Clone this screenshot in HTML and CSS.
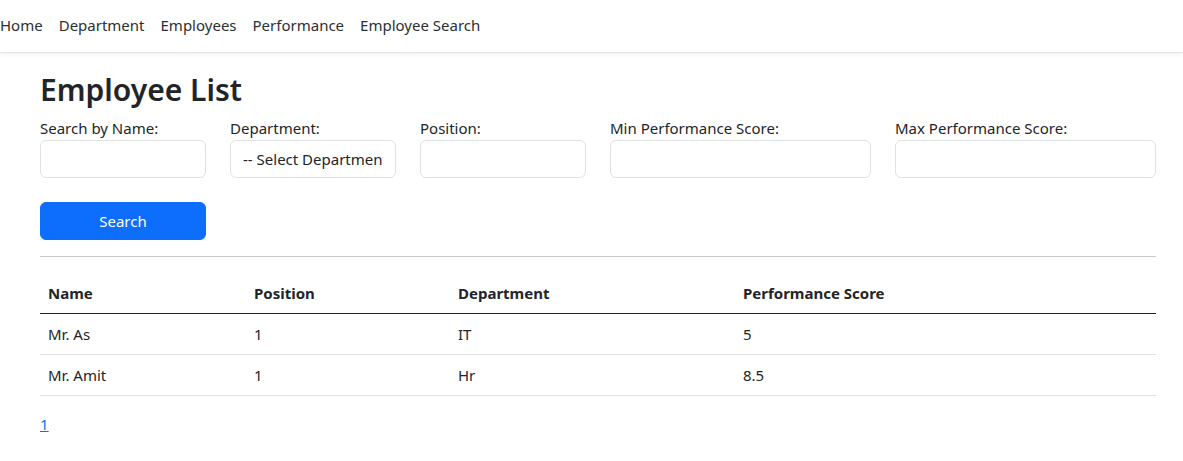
FILE: index.html
```html
<!DOCTYPE html>
<html lang="en">
<head>
<meta charset="utf-8">
<title>Employee List</title>
<link rel="stylesheet" href="styles.css">
</head>
<body>
<header class="navbar">
  <nav class="nav">
    <a class="nav-link" href="#">Home</a>
    <a class="nav-link" href="#">Department</a>
    <a class="nav-link" href="#">Employees</a>
    <a class="nav-link" href="#">Performance</a>
    <a class="nav-link" href="#">Employee Search</a>
  </nav>
</header>
<main class="container">
  <h2 class="title">Employee List</h2>
  <form class="filters">
    <div class="field">
      <label>Search by Name:</label>
      <input class="control" type="text">
    </div>
    <div class="field">
      <label>Department:</label>
      <select class="control select">
        <option>-- Select Department --</option>
      </select>
    </div>
    <div class="field">
      <label>Position:</label>
      <input class="control" type="text">
    </div>
    <div class="field">
      <label>Min Performance Score:</label>
      <input class="control" type="text">
    </div>
    <div class="field">
      <label>Max Performance Score:</label>
      <input class="control" type="text">
    </div>
  </form>
  <button class="btn" type="button">Search</button>
  <hr class="divider">
  <table class="table">
    <thead>
      <tr>
        <th class="c1">Name</th>
        <th class="c2">Position</th>
        <th class="c3">Department</th>
        <th>Performance Score</th>
      </tr>
    </thead>
    <tbody>
      <tr><td>Mr. As</td><td>1</td><td>IT</td><td>5</td></tr>
      <tr><td>Mr. Amit</td><td>1</td><td>Hr</td><td>8.5</td></tr>
    </tbody>
  </table>
  <div class="pager"><a href="#">1</a></div>
</main>
</body>
</html>
```
FILE: styles.css
```css
* { box-sizing: border-box; }
body {
  margin: 0;
  font-family: "Segoe UI", "Noto Sans", "Open Sans", sans-serif;
  font-size: 16px;
  line-height: 1.5;
  color: #212529;
  background: #fff;
}
.navbar {
  height: 53px;
  border-bottom: 1px solid #e2e4e6;
  box-shadow: 0 2px 4px rgba(0,0,0,0.05);
  display: flex;
  align-items: center;
}
.nav {
  display: flex;
  gap: 16px;
  padding-bottom: 1px;
}
.nav-link {
  color: #2b2f33;
  text-decoration: none;
  font-size: 15px;
}
.container {
  padding: 0 27px 0 40px;
}
.title {
  font-size: 30px;
  font-weight: 600;
  line-height: 36px;
  margin: 19px 0 8px;
}
.filters {
  display: grid;
  grid-template-columns: 166px 166px 166px 261px 261px;
  column-gap: 24px;
}
.field label {
  display: block;
  font-size: 15px;
  line-height: 24px;
}
.control {
  display: block;
  width: 100%;
  height: 38px;
  padding: 6px 12px;
  border: 1px solid #dee2e6;
  border-radius: 6px;
  font: inherit;
  color: #212529;
  background: #fff;
}
.select {
  appearance: none;
  -webkit-appearance: none;
  font-size: 15px;
}
.btn {
  display: block;
  margin-top: 24px;
  width: 166px;
  height: 38px;
  background: #0d6efd;
  color: #fff;
  border: 1px solid #0d6efd;
  border-radius: 6px;
  font: inherit;
  font-size: 15px;
}
.divider {
  margin: 16px 0;
  border: 0;
  border-top: 1px solid #c8c9ca;
}
.table {
  width: 100%;
  border-collapse: collapse;
  margin-bottom: 16px;
  font-size: 15px;
}
.table th, .table td {
  text-align: left;
  padding: 8px;
  line-height: 24px;
  border-bottom: 1px solid #dee2e6;
}
.table th {
  font-weight: 700;
  border-bottom: 1px solid #212529;
}
.c1 { width: 206px; }
.c2 { width: 204px; }
.c3 { width: 285px; }
.pager {
  line-height: 24px;
  font-size: 15px;
}
.pager a { color: #0d6efd; }
```
